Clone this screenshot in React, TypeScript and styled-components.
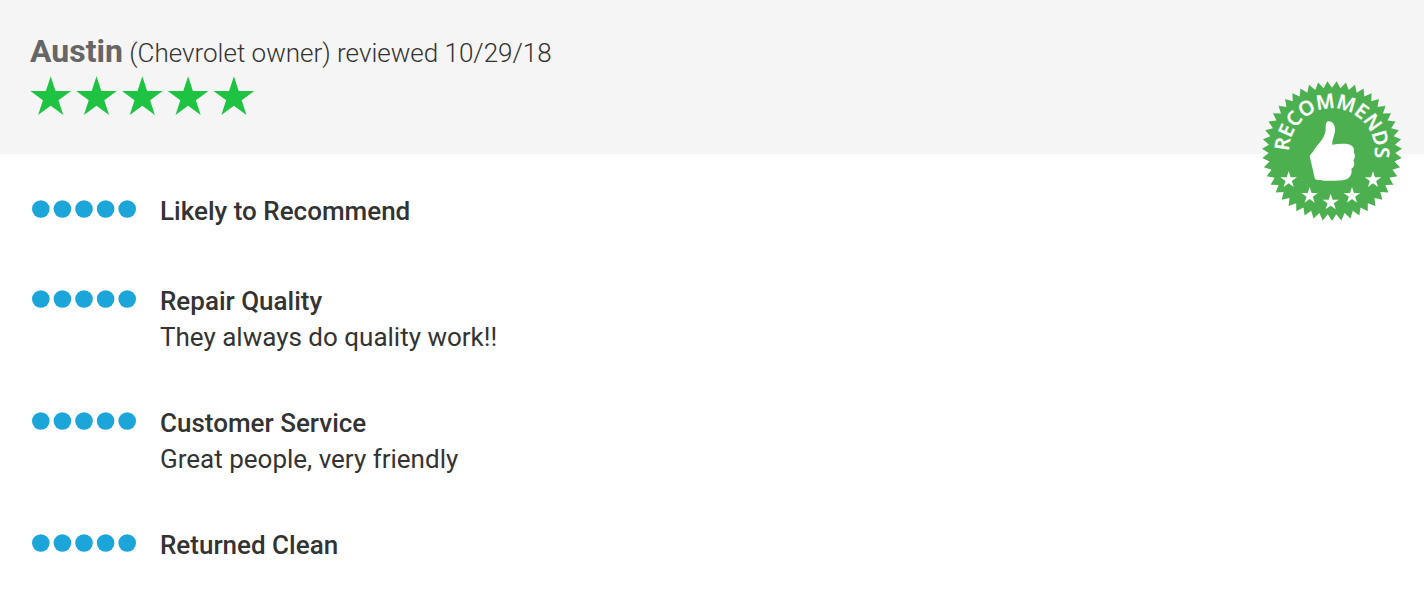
import React from "react";
import styled, { createGlobalStyle } from "styled-components";

const GlobalStyle = createGlobalStyle`
  body {
    margin: 0;
    background: #fff;
    color: #333;
    font-family: Roboto, "Liberation Sans", sans-serif;
    -webkit-font-smoothing: antialiased;
  }
`;

const Review = styled.article`
  position: relative;
`;

const Header = styled.header`
  background: #f5f5f5;
  padding: 31px 30px 38px;
`;

const Title = styled.h1`
  margin: 0;
  font-size: 26px;
  line-height: 40px;
  font-weight: 300;
`;

const Author = styled.strong`
  font-size: 32px;
  font-weight: 700;
  color: #666;
`;

const StarRating = styled.svg`
  display: block;
  width: 225px;
  height: 40px;
  margin-top: 3px;
  fill: #1ec341;
`;

const Badge = styled.svg`
  position: absolute;
  top: 81px;
  right: 22px;
  width: 140px;
  height: 140px;
`;

const BadgeText = styled.text`
  font-family: "Open Sans", "Noto Sans", sans-serif;
  font-size: 60px;
  font-weight: 600;
  fill: #fff;
  stroke: #fff;
  stroke-width: 1px;
`;

const Ratings = styled.ul`
  list-style: none;
  margin: 0;
  padding: 39px 30px;
  display: grid;
  gap: 54px;
`;

const Row = styled.li`
  display: flex;
  align-items: flex-start;
  gap: 24px;
  padding-left: 2px;
`;

const Dots = styled.svg`
  flex: none;
  width: 104px;
  height: 18px;
  margin-top: 7px;
  fill: #1ca5d8;
`;

const Label = styled.h2`
  margin: 0;
  font-size: 26px;
  line-height: 36px;
  font-weight: 500;
`;

const Comment = styled.p`
  margin: 0;
  margin-bottom: -4px;
  font-size: 26px;
  line-height: 36px;
`;

const starPoints = (cx: number, cy: number, r: number, inner = 0.382) =>
  Array.from({ length: 10 }, (_, i) => {
    const radius = i % 2 ? r * inner : r;
    const a = (i * Math.PI) / 5 - Math.PI / 2;
    return `${(cx + radius * Math.cos(a)).toFixed(2)},${(cy + radius * Math.sin(a)).toFixed(2)}`;
  }).join(" ");

const TEETH = 47;
const sealPoints = Array.from({ length: TEETH * 2 }, (_, i) => {
  const radius = i % 2 ? 190 : 210;
  const a = Math.PI / 2 + (i * Math.PI) / TEETH;
  return `${(228 + radius * Math.cos(a)).toFixed(2)},${(225 + radius * Math.sin(a)).toFixed(2)}`;
}).join(" ");

const badgeStars = [
  [98, 312],
  [161, 359],
  [224, 379],
  [288, 359],
  [351, 312],
];

const items = [
  { label: "Likely to Recommend" },
  { label: "Repair Quality", comment: "They always do quality work!!" },
  { label: "Customer Service", comment: "Great people, very friendly" },
  { label: "Returned Clean" },
];

const RecommendsBadge = () => (
  <Badge viewBox="18 15 420 420" role="img" aria-label="Recommends">
    <polygon points={sealPoints} fill="#4caf50" />
    <path id="badge-arc" d="M99 226 A129 129 0 0 1 357 226 A129 129 0 0 1 340 291" fill="none" />
    <BadgeText>
      <textPath href="#badge-arc">RECOMMENDS</textPath>
    </BadgeText>
    <path
      fill="#fff"
      d="M213 137 C224 133 238 141 237 163 C236 179 228 192 229 206 C245 204 263 202 276 205 C289 207 297 216 293 229 C299 238 297 247 292 253 C298 264 294 275 286 279 C289 291 284 303 273 309 C260 315 224 315 203 314 C194 313 185 313 177 310 L161 240 C164 233 171 230 174 222 C185 205 203 190 207 171 C211 160 207 144 213 137Z"
    />
    {badgeStars.map(([x, y]) => (
      <polygon key={x} points={starPoints(x, y, 26)} fill="#fff" />
    ))}
  </Badge>
);

const FiveDots = () => (
  <Dots viewBox="0 0 104 18" role="img" aria-label="5 out of 5">
    {[0, 1, 2, 3, 4].map((i) => (
      <circle key={i} cx={8.8 + i * 21.6} cy={9} r={8.8} />
    ))}
  </Dots>
);

export default function App() {
  return (
    <>
      <GlobalStyle />
      <Review>
        <Header>
          <Title>
            <Author>Austin</Author> (Chevrolet owner) reviewed 10/29/18
          </Title>
          <StarRating viewBox="0 0 225 40" role="img" aria-label="5 out of 5 stars">
            {[0, 1, 2, 3, 4].map((i) => (
              <polygon key={i} points={starPoints(20.7 + i * 45.8, 21.6, 21.4)} />
            ))}
          </StarRating>
        </Header>
        <RecommendsBadge />
        <Ratings>
          {items.map(({ label, comment }) => (
            <Row key={label}>
              <FiveDots />
              <div>
                <Label>{label}</Label>
                {comment && <Comment>{comment}</Comment>}
              </div>
            </Row>
          ))}
        </Ratings>
      </Review>
    </>
  );
}
